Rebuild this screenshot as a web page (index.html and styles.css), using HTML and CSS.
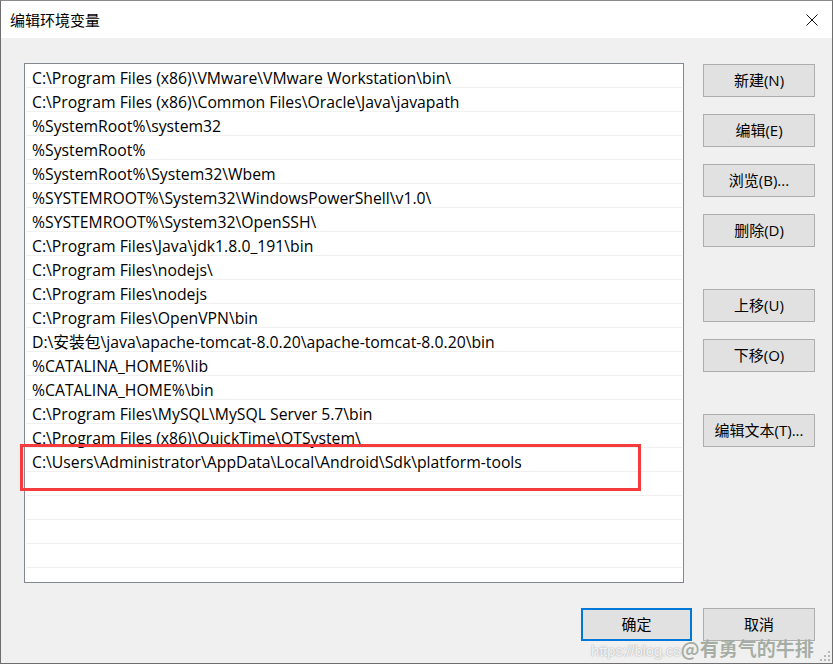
FILE: index.html
```html
<!DOCTYPE html>
<html lang="zh-CN">
	<head>
		<meta charset="UTF-8" />
		<meta name="viewport" content="width=device-width, initial-scale=1.0" />
		<title>编辑环境变量</title>
		<link rel="stylesheet" href="styles.css">
	</head>
	<body>
		<div class="window">
			<div class="title-bar">
				<span class="title">编辑环境变量</span>
				<svg class="close-icon" width="12" height="12" viewBox="0 0 12 12">
					<path d="M0.5 0.5L11.5 11.5M11.5 0.5L0.5 11.5" stroke="#111" stroke-width="1" fill="none" />
				</svg>
			</div>

			<div class="content">
				<div class="main">
					<div class="path-list">
						<div class="path-row">C:\Program Files (x86)\VMware\VMware Workstation\bin\</div>
						<div class="path-row">C:\Program Files (x86)\Common Files\Oracle\Java\javapath</div>
						<div class="path-row">%SystemRoot%\system32</div>
						<div class="path-row">%SystemRoot%</div>
						<div class="path-row">%SystemRoot%\System32\Wbem</div>
						<div class="path-row">%SYSTEMROOT%\System32\WindowsPowerShell\v1.0\</div>
						<div class="path-row">%SYSTEMROOT%\System32\OpenSSH\</div>
						<div class="path-row">C:\Program Files\Java\jdk1.8.0_191\bin</div>
						<div class="path-row">C:\Program Files\nodejs\</div>
						<div class="path-row">C:\Program Files\nodejs</div>
						<div class="path-row">C:\Program Files\OpenVPN\bin</div>
						<div class="path-row">D:\安装包\java\apache-tomcat-8.0.20\apache-tomcat-8.0.20\bin</div>
						<div class="path-row">%CATALINA_HOME%\lib</div>
						<div class="path-row">%CATALINA_HOME%\bin</div>
						<div class="path-row">C:\Program Files\MySQL\MySQL Server 5.7\bin</div>
						<div class="path-row">C:\Program Files (x86)\QuickTime\QTSystem\</div>
						<div class="path-row">C:\Users\Administrator\AppData\Local\Android\Sdk\platform-tools</div>
						<div class="path-row"></div>
						<div class="path-row"></div>
						<div class="path-row"></div>
						<div class="path-row"></div>
					</div>

					<div class="side-buttons">
						<button class="btn">新建(N)</button>
						<button class="btn">编辑(E)</button>
						<button class="btn">浏览(B)...</button>
						<button class="btn">删除(D)</button>
						<button class="btn group-start">上移(U)</button>
						<button class="btn">下移(O)</button>
						<button class="btn group-start">编辑文本(T)...</button>
					</div>
				</div>

				<div class="footer">
					<button class="btn btn-default">确定</button>
					<button class="btn">取消</button>
				</div>
			</div>

			<!-- annotation drawn on top of the screenshot -->
			<div class="highlight-box"></div>

			<div class="watermark">
				<span class="watermark-url">https://blog.cs</span><span class="watermark-name">@有勇气的牛排</span>
			</div>

			<svg class="resize-grip" width="10" height="10" viewBox="0 0 10 10">
				<rect x="8" y="0" width="2" height="2" fill="#b8b8b8" />
				<rect x="4" y="4" width="2" height="2" fill="#b8b8b8" />
				<rect x="8" y="4" width="2" height="2" fill="#b8b8b8" />
				<rect x="0" y="8" width="2" height="2" fill="#b8b8b8" />
				<rect x="4" y="8" width="2" height="2" fill="#b8b8b8" />
				<rect x="8" y="8" width="2" height="2" fill="#b8b8b8" />
			</svg>
		</div>
	</body>
</html>
```

FILE: styles.css
```css
* {
	margin: 0;
	padding: 0;
	box-sizing: border-box;
	font-family: "Open Sans", "Noto Sans CJK SC", sans-serif;
}
body {
	background-color: #ffffff;
}
.window {
	position: relative;
	width: 833px;
	height: 664px;
	border: 1px solid #6e6e6e;
	border-top-color: #8a8a8a;
	background-color: #f0f0f0;
	overflow: hidden;
}
.title-bar {
	height: 37px;
	background-color: #ffffff;
	display: flex;
	align-items: center;
	justify-content: space-between;
	padding: 0 14px 0 9px;
}
.title {
	font-family: "Noto Sans CJK SC", sans-serif;
	font-size: 15px;
	color: #000;
}
.content {
	padding: 25px 17px 0 23px;
}
.main {
	display: flex;
	gap: 19px;
}
.path-list {
	width: 660px;
	height: 520px;
	border: 1px solid #828790;
	background-color: #ffffff;
	padding: 0 1px;
	overflow: hidden;
}
.path-row {
	height: 24px;
	line-height: 21px;
	padding-top: 4px;
	border-bottom: 1px solid #f0f0f0;
	padding-left: 6px;
	font-size: 15.75px;
	color: #000;
	white-space: nowrap;
}
.side-buttons {
	display: flex;
	flex-direction: column;
	gap: 17px;
	padding-top: 1px;
}
.btn {
	width: 112px;
	height: 33px;
	padding-bottom: 2px;
	background-color: #e1e1e1;
	border: 1px solid #adadad;
	font-size: 15px;
	color: #000;
}
.group-start {
	margin-top: 25px;
}
.footer {
	display: flex;
	justify-content: flex-end;
	gap: 11px;
	margin-top: 25px;
}
.btn-default {
	width: 111px;
	border: 2px solid #0078d7;
}
.highlight-box {
	position: absolute;
	left: 19px;
	top: 443px;
	width: 621px;
	height: 47px;
	border: 3px solid #f53b3b;
}
.watermark {
	position: absolute;
	left: 590px;
	top: 633px;
	display: flex;
	align-items: baseline;
	white-space: nowrap;
}
.watermark-url {
	font-family: "Liberation Sans", sans-serif;
	font-size: 15px;
	letter-spacing: -0.2px;
	color: rgba(255, 255, 255, 0.9);
	text-shadow: 0 0 1px rgba(120, 120, 120, 0.6), 0 0 2px rgba(160, 160, 160, 0.5);
}
.watermark-name {
	font-family: "Noto Sans CJK SC", sans-serif;
	font-size: 19px;
	font-weight: 700;
	color: rgba(150, 160, 150, 0.85);
	text-shadow: 0 0 1px rgba(255, 255, 255, 0.6);
}
.resize-grip {
	position: absolute;
	right: 2px;
	bottom: 2px;
}
```
